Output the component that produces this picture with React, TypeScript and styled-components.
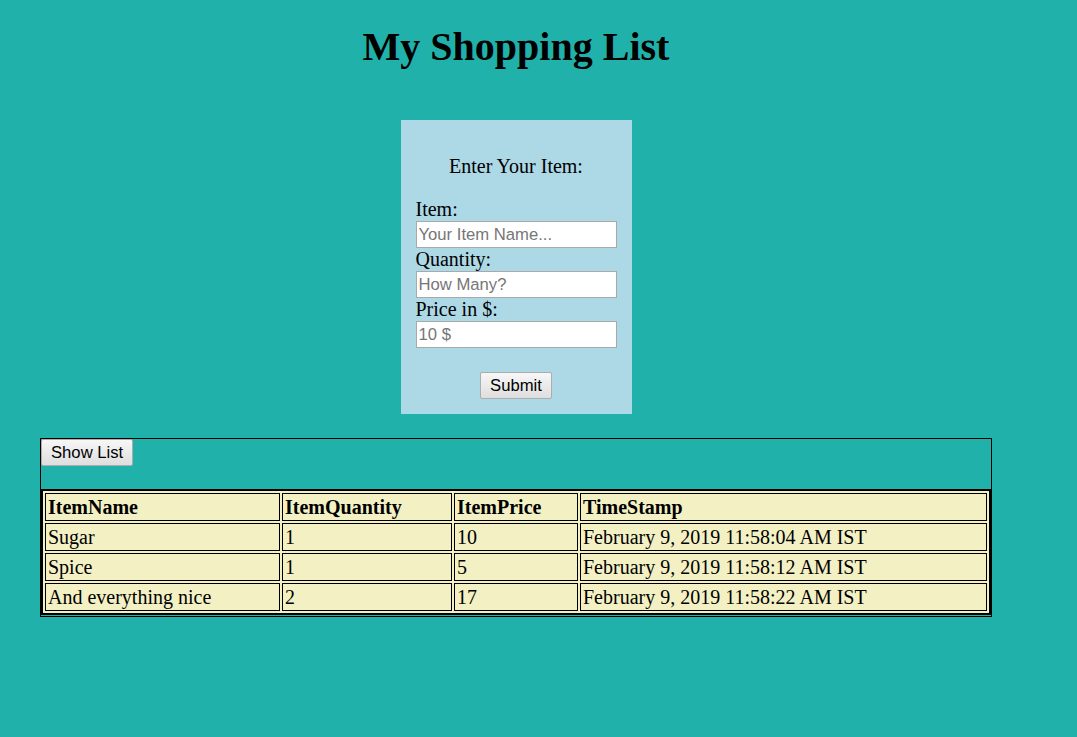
import styled, { createGlobalStyle } from 'styled-components'

const items = [
  { name: 'Sugar', quantity: 1, price: 10, time: 'February 9, 2019 11:58:04 AM IST' },
  { name: 'Spice', quantity: 1, price: 5, time: 'February 9, 2019 11:58:12 AM IST' },
  { name: 'And everything nice', quantity: 2, price: 17, time: 'February 9, 2019 11:58:22 AM IST' },
]

const columns = [
  { title: 'ItemName', width: 235 },
  { title: 'ItemQuantity', width: 170 },
  { title: 'ItemPrice', width: 124 },
  { title: 'TimeStamp' },
]

export default function App() {
  return (
    <>
      <GlobalStyle />
      <Page>
        <Title>My Shopping List</Title>

        <ItemForm onSubmit={(e) => e.preventDefault()}>
          <FormHeading>Enter Your Item:</FormHeading>
          <Label htmlFor="item">Item:</Label>
          <Input id="item" type="text" placeholder="Your Item Name..." />
          <Label htmlFor="quantity">Quantity:</Label>
          <Input id="quantity" type="text" placeholder="How Many?" />
          <Label htmlFor="price">Price in $:</Label>
          <Input id="price" type="text" placeholder="10 $" />
          <SubmitRow>
            <Button type="submit">Submit</Button>
          </SubmitRow>
        </ItemForm>

        <ListPanel>
          <Button type="button">Show List</Button>
          <ListTable>
            <colgroup>
              {columns.map((c) => (
                <col key={c.title} width={c.width} />
              ))}
            </colgroup>
            <thead>
              <tr>
                {columns.map((c) => (
                  <HeadCell key={c.title}>{c.title}</HeadCell>
                ))}
              </tr>
            </thead>
            <tbody>
              {items.map((item) => (
                <tr key={item.time}>
                  <Cell>{item.name}</Cell>
                  <Cell>{item.quantity}</Cell>
                  <Cell>{item.price}</Cell>
                  <Cell>{item.time}</Cell>
                </tr>
              ))}
            </tbody>
          </ListTable>
        </ListPanel>
      </Page>
    </>
  )
}

const GlobalStyle = createGlobalStyle`
  body {
    margin: 0;
    background-color: #20b2aa;
    color: #000;
    font-family: 'Liberation Serif', 'Times New Roman', serif;
    font-size: 20px;
  }
`

const Page = styled.div`
  width: 952px;
  padding-left: 40px;
`

const Title = styled.h1`
  margin: 24px 0 0;
  font-size: 40px;
  font-weight: 700;
  line-height: 46px;
  text-align: center;
`

const ItemForm = styled.form`
  width: 201px;
  margin: 50px auto 0;
  padding: 15px;
  background-color: #add8e6;
`

const FormHeading = styled.p`
  margin: 20px 0;
  line-height: 23px;
  text-align: center;
`

const Label = styled.label`
  display: block;
  line-height: 23px;
`

const Input = styled.input`
  display: block;
  box-sizing: border-box;
  width: 201px;
  height: 27px;
  margin: 0;
  padding: 1px 2px;
  border: 1px solid #a9a9a9;
  background: #fff;
  font-family: 'Liberation Sans', Arial, sans-serif;
  font-size: 16.67px;

  &::placeholder {
    color: #767676;
  }
`

const SubmitRow = styled.div`
  display: flex;
  justify-content: center;
  margin-top: 24px;
`

const Button = styled.button`
  display: block;
  box-sizing: border-box;
  height: 27px;
  margin: 0;
  padding: 0 9px;
  border: 1px solid #adadad;
  border-radius: 2px;
  background: linear-gradient(#f7f7f7, #dedede);
  color: #000;
  font-family: 'Liberation Sans', Arial, sans-serif;
  font-size: 16.67px;
  line-height: 25px;
`

const ListPanel = styled.div`
  margin-top: 24px;
  border: 1px solid #000;
`

const ListTable = styled.table`
  width: 100%;
  box-sizing: border-box;
  margin: 23px 0 1px;
  table-layout: fixed;
  border: 2px solid #000;
  border-spacing: 2px;
  background-color: #f3f1c4;
`

const HeadCell = styled.th`
  padding: 1px 2px;
  border: 1px solid #000;
  font-weight: 700;
  line-height: 24px;
  text-align: left;
  white-space: nowrap;
`

const Cell = styled.td`
  padding: 1px 2px;
  border: 1px solid #000;
  line-height: 24px;
  white-space: nowrap;
`
